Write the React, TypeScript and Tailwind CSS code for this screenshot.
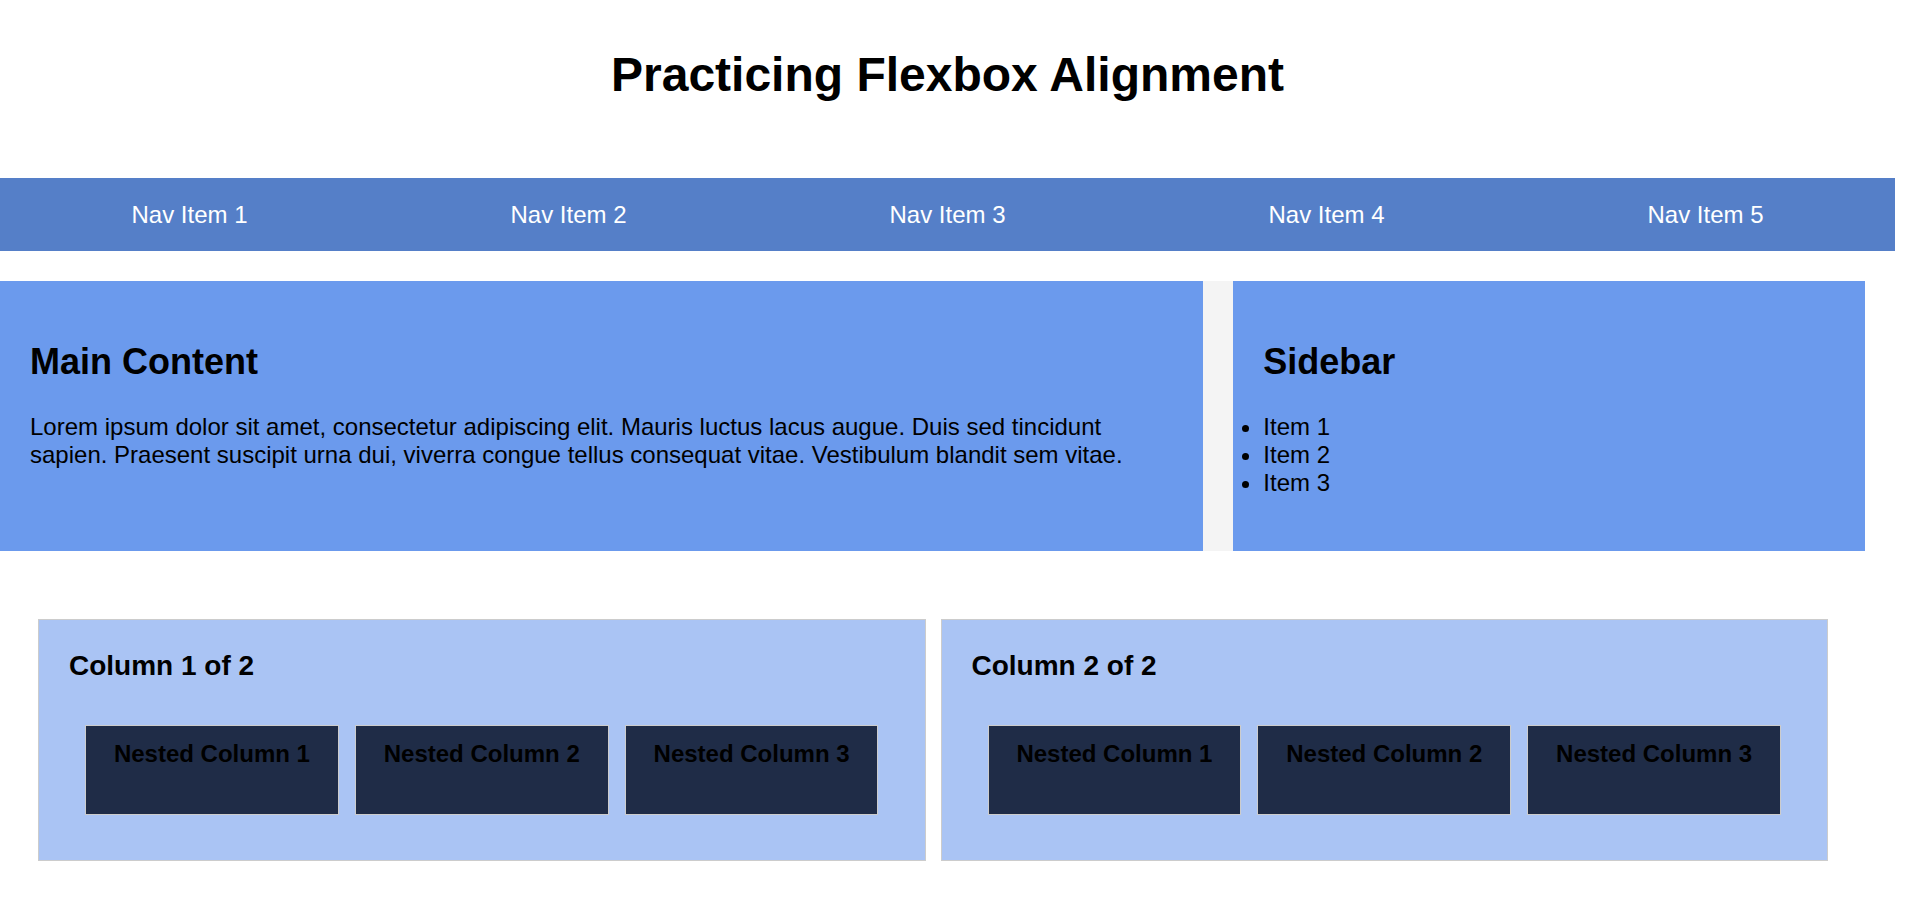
import React from 'react';

const navItems = ['Nav Item 1', 'Nav Item 2', 'Nav Item 3', 'Nav Item 4', 'Nav Item 5'];
const sideItems = ['Item 1', 'Item 2', 'Item 3'];

function Column({ title }: { title: string }) {
  return (
    <div className="flex-1 border border-[#cccccc] bg-[#aac4f4] p-[30px]">
      <h3 className="mb-[27px] text-[28px] font-bold">{title}</h3>
      <div className="flex px-[8px] pt-[16px] pb-[15px]">
        {[1, 2, 3].map((n) => (
          <div key={n} className="mx-[8px] h-[90px] flex-1 border border-[#cccccc] bg-[#1f2c47] pt-[14px] text-center">
            <h4 className="text-[24px] font-bold">Nested Column {n}</h4>
          </div>
        ))}
      </div>
    </div>
  );
}

export default function App() {
  return (
    <div className="w-[1895px] bg-white pb-[482px] font-['Liberation_Sans',Arial,sans-serif] leading-[normal] text-black">
      <header className="pt-[47px] pb-[76px] text-center">
        <h1 className="text-[48px] font-bold">Practicing Flexbox Alignment</h1>
      </header>

      <nav className="flex h-[73px] items-center bg-[#557fc8]">
        {navItems.map((item) => (
          <a key={item} className="flex-1 text-center text-[24px] text-white">
            {item}
          </a>
        ))}
      </nav>

      {/* main + sidebar */}
      <div className="mt-[30px] mr-[30px] flex min-h-[270px]">
        <main className="flex-[2_2_0%] bg-[#6b9aed] p-[30px]">
          <h2 className="my-[30px] text-[36px] font-bold">Main Content</h2>
          <p className="my-[24px] text-[24px]">
            Lorem ipsum dolor sit amet, consectetur adipiscing elit. Mauris luctus lacus augue. Duis sed tincidunt sapien. Praesent suscipit urna dui, viverra congue tellus consequat vitae. Vestibulum blandit sem vitae.
          </p>
        </main>
        <div className="w-[30px] shrink-0 bg-[#f4f4f4]" />
        <aside className="flex-[1_1_0%] bg-[#6b9aed] p-[30px]">
          <h2 className="my-[30px] text-[36px] font-bold">Sidebar</h2>
          <ul className="my-[24px] list-outside list-disc pl-0 text-[24px]">
            {sideItems.map((item) => (
              <li key={item}>{item}</li>
            ))}
          </ul>
        </aside>
      </div>

      <div className="mt-[68px] flex gap-[15px] pl-[38px] pr-[67px]">
        <Column title="Column 1 of 2" />
        <Column title="Column 2 of 2" />
      </div>
    </div>
  );
}
